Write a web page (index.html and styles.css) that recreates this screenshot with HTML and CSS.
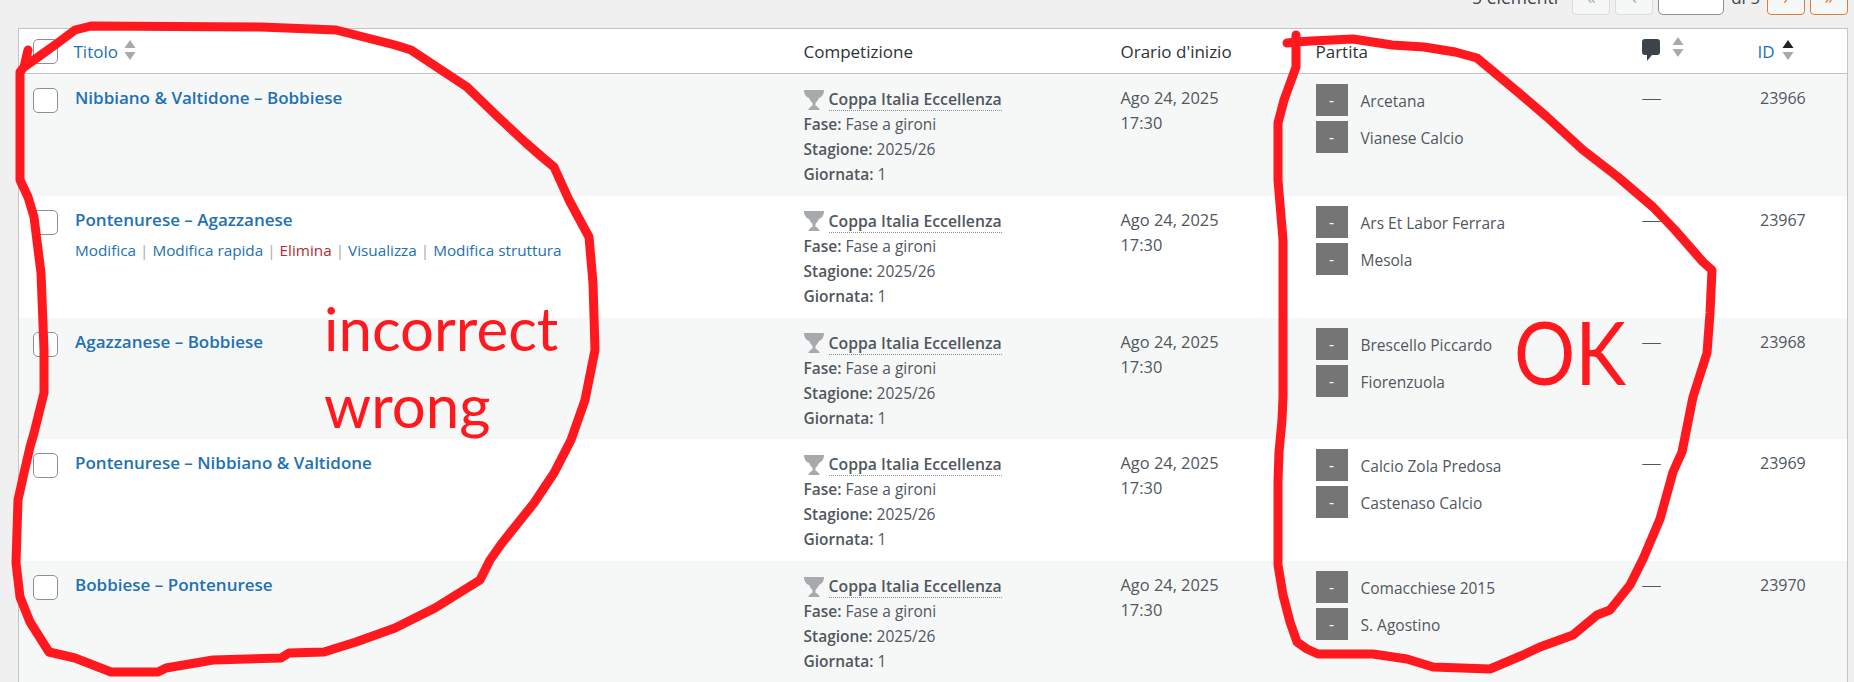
FILE: index.html
```html
<!DOCTYPE html>
<html lang="it">
<head>
<meta charset="utf-8">
<title>Partite</title>
<link rel="stylesheet" href="styles.css">
</head>
<body>
<div class="page">
  <nav class="tablenav">
    <span class="count">5 elementi</span>
    <span class="pg-btn">«</span>
    <span class="pg-btn">‹</span>
    <span class="pg-input">1</span>
    <span class="pg-of">di 5</span>
    <span class="pg-btn active">›</span>
    <span class="pg-btn active">»</span>
  </nav>
  <table class="list">
    <colgroup>
      <col class="c-check"><col class="c-title"><col class="c-comp"><col class="c-date"><col class="c-match"><col class="c-comm"><col class="c-id">
    </colgroup>
    <thead>
      <tr>
        <th class="check"><span class="box"></span></th>
        <th class="link"><span class="th-in">Titolo <svg class="sort" viewBox="0 0 12 20"><path class="off" d="M6 0l5.500 8H.5zM.5 12h11L6 20z"/></svg></span></th>
        <th>Competizione</th>
        <th>Orario d'inizio</th>
        <th>Partita</th>
        <th><span class="th-in"><svg class="bubble" viewBox="0 0 18 22"><path d="M3 0h12a3 3 0 0 1 3 3v10a3 3 0 0 1-3 3h-5l-5 6v-6H3a3 3 0 0 1-3-3V3a3 3 0 0 1 3-3z"/></svg><svg class="sort s-comm" viewBox="0 0 12 20"><path class="off" d="M6 0l5.500 8H.5zM.5 12h11L6 20z"/></svg></span></th>
        <th class="link"><span class="th-in">ID <svg class="sort s-id" viewBox="0 0 12 20"><path class="on" d="M6 0l5.500 8H.5z"/><path class="off" d="M.5 12h11L6 20z"/></svg></span></th>
      </tr>
    </thead>
    <tbody>
      <tr class="alt">
        <td class="check"><span class="box"></span></td>
        <td class="title"><a>Nibbiano &amp; Valtidone – Bobbiese</a></td>
        <td class="comp"><div class="league"><svg class="cup" viewBox="0 0 20 20"><path d="M0 0h20c0 4-2 7-5 8-1 2-2.500 4-3.500 5v3h1l3 3v1h-11v-1l3-3h1v-3c-1-1-2.500-3-3.500-5C2 7 0 4 0 0z"/></svg><b class="lname">Coppa Italia Eccellenza</b></div><div><b>Fase:</b> Fase a gironi</div><div><b>Stagione:</b> 2025/26</div><div><b>Giornata:</b> 1</div></td>
        <td class="date">Ago 24, 2025<br>17:30</td>
        <td class="match"><div class="team"><span class="badge">-</span>Arcetana</div><div class="team"><span class="badge">-</span>Vianese Calcio</div></td>
        <td class="dash">—</td>
        <td class="id">23966</td>
      </tr>
      <tr>
        <td class="check"><span class="box"></span></td>
        <td class="title"><a>Pontenurese – Agazzanese</a>
          <div class="actions"><a>Modifica</a> | <a>Modifica rapida</a> | <a class="del">Elimina</a> | <a>Visualizza</a> | <a>Modifica struttura</a></div></td>
        <td class="comp"><div class="league"><svg class="cup" viewBox="0 0 20 20"><path d="M0 0h20c0 4-2 7-5 8-1 2-2.500 4-3.500 5v3h1l3 3v1h-11v-1l3-3h1v-3c-1-1-2.500-3-3.500-5C2 7 0 4 0 0z"/></svg><b class="lname">Coppa Italia Eccellenza</b></div><div><b>Fase:</b> Fase a gironi</div><div><b>Stagione:</b> 2025/26</div><div><b>Giornata:</b> 1</div></td>
        <td class="date">Ago 24, 2025<br>17:30</td>
        <td class="match"><div class="team"><span class="badge">-</span>Ars Et Labor Ferrara</div><div class="team"><span class="badge">-</span>Mesola</div></td>
        <td class="dash">—</td>
        <td class="id">23967</td>
      </tr>
      <tr class="alt">
        <td class="check"><span class="box"></span></td>
        <td class="title"><a>Agazzanese – Bobbiese</a></td>
        <td class="comp"><div class="league"><svg class="cup" viewBox="0 0 20 20"><path d="M0 0h20c0 4-2 7-5 8-1 2-2.500 4-3.500 5v3h1l3 3v1h-11v-1l3-3h1v-3c-1-1-2.500-3-3.500-5C2 7 0 4 0 0z"/></svg><b class="lname">Coppa Italia Eccellenza</b></div><div><b>Fase:</b> Fase a gironi</div><div><b>Stagione:</b> 2025/26</div><div><b>Giornata:</b> 1</div></td>
        <td class="date">Ago 24, 2025<br>17:30</td>
        <td class="match"><div class="team"><span class="badge">-</span>Brescello Piccardo</div><div class="team"><span class="badge">-</span>Fiorenzuola</div></td>
        <td class="dash">—</td>
        <td class="id">23968</td>
      </tr>
      <tr>
        <td class="check"><span class="box"></span></td>
        <td class="title"><a>Pontenurese – Nibbiano &amp; Valtidone</a></td>
        <td class="comp"><div class="league"><svg class="cup" viewBox="0 0 20 20"><path d="M0 0h20c0 4-2 7-5 8-1 2-2.500 4-3.500 5v3h1l3 3v1h-11v-1l3-3h1v-3c-1-1-2.500-3-3.500-5C2 7 0 4 0 0z"/></svg><b class="lname">Coppa Italia Eccellenza</b></div><div><b>Fase:</b> Fase a gironi</div><div><b>Stagione:</b> 2025/26</div><div><b>Giornata:</b> 1</div></td>
        <td class="date">Ago 24, 2025<br>17:30</td>
        <td class="match"><div class="team"><span class="badge">-</span>Calcio Zola Predosa</div><div class="team"><span class="badge">-</span>Castenaso Calcio</div></td>
        <td class="dash">—</td>
        <td class="id">23969</td>
      </tr>
      <tr class="alt">
        <td class="check"><span class="box"></span></td>
        <td class="title"><a>Bobbiese – Pontenurese</a></td>
        <td class="comp"><div class="league"><svg class="cup" viewBox="0 0 20 20"><path d="M0 0h20c0 4-2 7-5 8-1 2-2.500 4-3.500 5v3h1l3 3v1h-11v-1l3-3h1v-3c-1-1-2.500-3-3.500-5C2 7 0 4 0 0z"/></svg><b class="lname">Coppa Italia Eccellenza</b></div><div><b>Fase:</b> Fase a gironi</div><div><b>Stagione:</b> 2025/26</div><div><b>Giornata:</b> 1</div></td>
        <td class="date">Ago 24, 2025<br>17:30</td>
        <td class="match"><div class="team"><span class="badge">-</span>Comacchiese 2015</div><div class="team"><span class="badge">-</span>S. Agostino</div></td>
        <td class="dash">—</td>
        <td class="id">23970</td>
      </tr>
    </tbody>
  </table>
  <svg class="ink" viewBox="0 0 1854 682">
    <path class="scribble" d="M28 50L24 67L20 72L20 180L28 197L34 217L36 233L41 273L44 350L44 393L34 433L30 447L24 473L18 500L16 563L20 597L30 622L49 652L75 658L111 672L158 672L166 668L213 660L281 658L289 653L324 652L356 642L395 628L435 608L480 580L490 560L502 543L534 503L554 473L571 440L585 400L595 350L593 283L589 237L569 200L554 167L542 157L526 143L498 117L467 87L411 50L395 45L336 30L261 27L91 26L75 30L59 42L34 60L24 67"/>
    <path class="scribble" d="M1287 43L1296 42L1296 35L1296 67L1284 100L1278 123L1278 180L1283 240L1283 397L1282 420L1279 452L1278 482L1278 565L1283 595L1290 622L1297 642L1307 649L1318 654L1373 654L1407 659L1433 667L1490 669L1523 655L1540 647L1573 635L1597 615L1610 610L1630 585L1643 559L1660 519L1673 472L1682 452L1693 397L1707 353L1710 313L1712 270L1703 262L1675 230L1653 207L1618 177L1583 150L1547 117L1519 93L1477 58L1455 52L1424 47L1392 45L1353 39L1311 41L1296 42"/>
    <text class="note" x="324" y="351">incorrect</text>
    <text class="note" x="324" y="428">wrong</text>
    <text class="note big" x="1514" y="385" textLength="112" lengthAdjust="spacingAndGlyphs">OK</text>
  </svg>
</div>
</body>
</html>
```
FILE: styles.css
```css
html, body {
  margin: 0;
  height: 100%;
  overflow: hidden;
  background: #f0f0f1;
}
.page {
  position: relative;
  width: 1854px;
  height: 682px;
  overflow: hidden;
  font-family: "Open Sans", "Noto Sans", sans-serif;
  font-size: 15.5px;
  line-height: 25px;
  color: #50575e;
}
.tablenav {
  box-sizing: border-box;
  height: 28px;
  padding: 0 6px 13px 0;
  display: flex;
  justify-content: flex-end;
  align-items: flex-end;
  gap: 5px;
}
.count { margin: 0 9px 5px 0; color: #3c434a; font-size: 17.5px; }
.pg-of { margin: 0 2px 5px; color: #3c434a; font-size: 17px; }
.pg-btn {
  box-sizing: border-box;
  flex: none;
  width: 38px;
  height: 40px;
  line-height: 42px;
  font-size: 18px;
  text-align: center;
  border: 1px solid #dcdcde;
  border-radius: 4px;
  background: #f6f7f7;
  color: #a7aaad;
}
.pg-btn.active {
  border-color: #d98036;
  color: #d98036;
}
.pg-input {
  box-sizing: border-box;
  flex: none;
  width: 66px;
  height: 41px;
  line-height: 38px;
  text-align: center;
  border: 1px solid #8c8f94;
  border-radius: 5px;
  background: #fff;
  color: #2c3338;
}
.list {
  table-layout: fixed;
  border-collapse: separate;
  border-spacing: 0;
  width: 1830px;
  margin-left: 18px;
  background: #fff;
  border: 1px solid #c3c4c7;
}
.c-check { width: 42px; }
.c-title { width: 730px; }
.c-comp { width: 317px; }
.c-date { width: 195px; }
.c-match { width: 326px; }
.c-comm { width: 116px; }
.c-id { width: 102px; }
th {
  height: 45px;
  padding: 0 12.5px;
  text-align: left;
  font-weight: 400;
  font-size: 17px;
  color: #2c3338;
  border-bottom: 1px solid #c3c4c7;
  box-sizing: border-box;
}
th.link { color: #2271b1; }
th.check { padding: 0 0 0 14px; }
.th-in { display: inline-flex; align-items: center; gap: 6px; }
.sort { width: 12px; height: 20px; flex: none; margin-top: -2px; }
.off { fill: #a7aaad; }
.on { fill: #1d2327; }
.bubble { width: 18px; height: 22px; fill: #3c434a; flex: none; margin-top: 3px; }
.s-comm { margin-left: 6px; }
.s-id { margin-left: 1px; }
td {
  box-sizing: border-box;
  height: 121.75px;
  padding: 11px 12.5px 0;
  vertical-align: top;
}
.alt td { background: #f6f7f7; }
td.check { padding: 14px 0 0 14px; }
.box {
  display: block;
  box-sizing: border-box;
  width: 25px;
  height: 25px;
  background: #fff;
  border: 1px solid #8c8f94;
  border-radius: 5px;
}
td.title { padding-left: 14px; padding-top: 11px; }
.title > a { color: #2271b1; font-weight: 600; font-size: 17px; }
.actions { margin-top: 5px; color: #a7aaad; font-size: 15.3px; }
.actions a { color: #2271b1; }
.actions .del { color: #b32d2e; }
td.comp { padding-top: 14px; }
.league { display: flex; align-items: center; font-size: 15.8px; margin-bottom: 1px; }
.cup { width: 20px; height: 20px; fill: #a7aaad; flex: none; margin-right: 5px; }
b { font-weight: 600; }
.lname { border-bottom: 1px dotted #8c8f94; line-height: 22px; }
td.date { font-size: 16.4px; }
td.match { padding-top: 10px; }
.team { display: flex; align-items: flex-start; gap: 13px; height: 32px; line-height: 34px; margin-bottom: 5px; }
.badge {
  flex: none;
  width: 32px;
  height: 32px;
  line-height: 32px;
  text-align: center;
  background: #757575;
  color: #fff;
}
td.dash { font-size: 20px; padding-top: 11px; font-weight: 300; color: #50575e; }
td.id { padding: 12px 0 0 15px; font-size: 16px; }
.ink {
  position: absolute;
  left: 0;
  top: 0;
  width: 1854px;
  height: 682px;
  pointer-events: none;
}
.scribble {
  fill: none;
  stroke: #ff191f;
  stroke-width: 9;
  stroke-linejoin: round;
  stroke-linecap: round;
}
.note {
  font-family: Lato, "Open Sans", sans-serif;
  font-size: 60px;
  fill: #ff191f;
}
.note.big { font-size: 88px; }
```
